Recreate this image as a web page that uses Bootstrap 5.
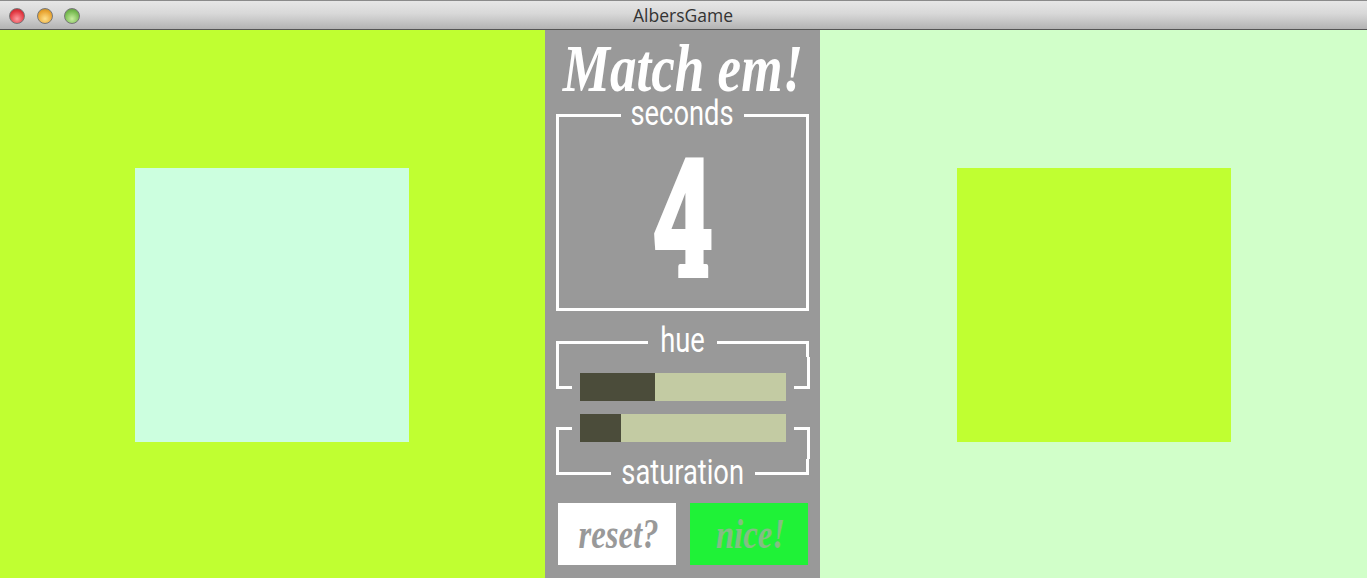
<!DOCTYPE html>
<html lang="en"><head><meta charset="utf-8"><title>AlbersGame</title>
<link rel="stylesheet" href="https://cdn.jsdelivr.net/npm/bootstrap@5.3.0/dist/css/bootstrap.min.css">
<style>
html,body{height:578px;overflow:hidden;background:#999}
.titlebar{height:30px;background:linear-gradient(#e6e6e6,#d8d8d8 45%,#b3b3b3);border-bottom:1px solid #555;border-top:1px solid #8a8a8a;position:relative}
.titletext{font:17.5px/28px "Open Sans",sans-serif;color:#333;margin-left:-1px}
.lights{position:absolute;left:9px;top:7px;gap:11.5px}
.light{width:16px;height:16px;border-radius:50%;border:1px solid #777}
.l-r{background:radial-gradient(circle at 50% 70%,#ff9aa0,#e0323c 65%,#a52a30)}
.l-y{background:radial-gradient(circle at 50% 70%,#ffe08a,#e8a22e 65%,#a8802e)}
.l-g{background:radial-gradient(circle at 50% 70%,#c8eda0,#74b84e 65%,#5b8a44)}
.stage{height:548px}
.side-a{width:545px;background:#c0ff31}
.side-b{width:547px;background:#d1ffc9}
.patch{width:274px;height:274px}
.p-mint{background:#ccffdf;margin-top:2px;margin-left:-2px}
.p-lime{background:#c0ff31;margin-top:2px}
.panel{width:275px;background:#999;padding:0 11px;color:#fff}
.headline{height:70px;padding-top:8px;font:italic 700 68px/60px "Liberation Serif",serif;white-space:nowrap}
.headline span{display:inline-block;transform:scaleX(.78);flex:none}
.frame-head{height:30px}
.rule{flex:1 1 0;border:0 solid #fff}
.rule-tl{border-top-width:3px;border-left-width:3px;margin-top:14px}
.rule-tr{border-top-width:3px;border-right-width:3px;margin-top:14px}
.rule-bl{border-bottom-width:3px;border-left-width:3px;margin-bottom:14px}
.rule-br{border-bottom-width:3px;border-right-width:3px;margin-bottom:14px}
.tag{font:400 35px/28px Roboto,sans-serif;white-space:nowrap}
.tag span{display:inline-block;transform:scaleX(.78);flex:none}
.w-sec{width:123px}.w-hue{width:69px}.w-sat{width:144px}
.timer{height:181px;border:3px solid #fff;border-top:0;font:900 165px/1 Roboto,sans-serif}
.digit{display:inline-block;position:relative;transform:scaleX(.665);margin-top:6px}
.digit::after{content:"";position:absolute;left:41px;bottom:23px;height:14px;width:45px;background:#fff;border-radius:3px 3px 0 0}
.gap-a{height:16px}
.barrow{gap:8px}
.foot{width:16px;border:0 solid #fff;flex:none}
.foot-tl{height:32px;border-left-width:3px;border-bottom-width:3px}
.foot-tr{height:32px;border-right-width:3px;border-bottom-width:3px}
.foot-bl{margin-top:13px;border-left-width:3px;border-top-width:3px}
.foot-br{margin-top:13px;border-right-width:3px;border-top-width:3px}
.meter{width:206px;height:28px;background:#c3cba3;flex:none}
.meter-t{margin-top:16px}
.meter-fill{height:100%;background:#4b4c3a}
.row-b{height:45px;margin-top:13px}
.btn-wrap{margin-top:14px;gap:14px;padding-left:2px}
.act{width:118px;height:62px;border:0;border-radius:0;padding:0 0 0 3px;font:italic 700 43px/60px "Liberation Serif",serif;color:#999}
.act span{display:inline-block;transform:scaleX(.76)}
.act-w,.act-w:hover{background:#fff;color:#999}
.act-g,.act-g:hover{background:#1ff237;color:#84bd84}
</style></head>
<body>
<div class="titlebar text-center"><div class="lights d-flex"><div class="light l-r"></div><div class="light l-y"></div><div class="light l-g"></div></div><div class="titletext">AlbersGame</div></div>
<div class="stage d-flex">
 <div class="side-a d-flex align-items-center justify-content-center"><div class="patch p-mint"></div></div>
 <div class="panel">
  <div class="headline d-flex justify-content-center"><span>Match em!</span></div>
  <div class="d-flex frame-head"><div class="rule rule-tl"></div><div class="tag w-sec d-flex justify-content-center"><span>seconds</span></div><div class="rule rule-tr"></div></div>
  <div class="timer text-center"><span class="digit">4</span></div>
  <div class="gap-a"></div>
  <div class="d-flex frame-head"><div class="rule rule-tl"></div><div class="tag w-hue d-flex justify-content-center"><span>hue</span></div><div class="rule rule-tr"></div></div>
  <div class="d-flex barrow"><div class="foot foot-tl"></div><div class="meter meter-t"><div class="meter-fill" style="width:75px"></div></div><div class="foot foot-tr"></div></div>
  <div class="d-flex barrow row-b"><div class="foot foot-bl"></div><div class="meter"><div class="meter-fill" style="width:41px"></div></div><div class="foot foot-br"></div></div>
  <div class="d-flex frame-head"><div class="rule rule-bl"></div><div class="tag w-sat d-flex justify-content-center"><span>saturation</span></div><div class="rule rule-br"></div></div>
  <div class="d-flex btn-wrap"><button class="btn act act-w"><span>reset?</span></button><button class="btn act act-g"><span>nice!</span></button></div>
 </div>
 <div class="side-b d-flex align-items-center justify-content-center"><div class="patch p-lime"></div></div>
</div>
<script src="https://cdn.jsdelivr.net/npm/bootstrap@5.3.0/dist/js/bootstrap.bundle.min.js"></script>
</body></html>
